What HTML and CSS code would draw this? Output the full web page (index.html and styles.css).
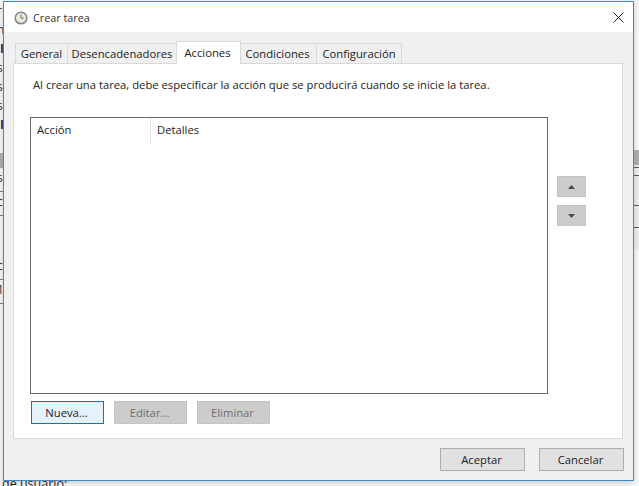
FILE: index.html
```html
<!DOCTYPE html>
<html lang="es">
<head>
<meta charset="utf-8">
<title>Crear tarea</title>
<link rel="stylesheet" href="styles.css">
</head>
<body>
<div class="desktop">
  <div class="behind-left">
    <div class="bg-row">r</div>
    <div class="bg-row">n</div>
    <div class="bg-row strong">I</div>
    <div class="bg-row">s</div>
    <div class="bg-row">s</div>
    <div class="bg-row">s</div>
    <div class="bg-row strong">I</div>
    <div class="bg-row">l</div>
    <div class="bg-band"></div>
    <div class="bg-row cell">s</div>
    <div class="bg-row cell">c</div>
    <div class="bg-gap"></div>
    <div class="bg-row cell">c</div>
    <div class="bg-row cell">1</div>
  </div>
  <div class="behind-right">
    <div class="bg-band"></div>
    <div class="r-line first"></div>
    <div class="r-line second"></div>
    <div class="r-line third"></div>
    <div class="r-line fourth"></div>
  </div>
  <div class="behind-bottom">de usuario:</div>

  <section class="dialog">
    <header class="titlebar">
      <svg class="clock" width="14" height="14" viewBox="0 0 14 14" aria-hidden="true">
        <circle cx="7" cy="7" r="5.800" fill="#ece9da" stroke="#85878b" stroke-width="1.600"/>
        <path d="M7 3.200v4h2.800" fill="none" stroke="#77776a" stroke-width="1"/>
      </svg>
      <span class="title">Crear tarea</span>
      <svg class="close" width="11" height="11" viewBox="0 0 11 11" aria-hidden="true">
        <path d="M.5.5l10 10M10.500.5l-10 10" stroke="#222" stroke-width="1" fill="none"/>
      </svg>
    </header>
    <div class="body">
      <nav class="tabs">
        <span class="tab t1">General</span>
        <span class="tab t2">Desencadenadores</span>
        <span class="tab active">Acciones</span>
        <span class="tab t4">Condiciones</span>
        <span class="tab t5">Configuración</span>
      </nav>
      <div class="panel">
        <p class="intro">Al crear una tarea, debe especificar la acción que se producirá cuando se inicie la tarea.</p>
        <div class="list-row">
          <div class="list">
            <div class="list-head">
              <span class="col col-action">Acción</span>
              <span class="col col-details">Detalles</span>
            </div>
          </div>
          <div class="arrows">
            <button class="arrow" type="button" aria-label="Subir"><svg width="7" height="4" viewBox="0 0 7 4"><path d="M3.500 0L7 4H0z" fill="#4a4a4a"/></svg></button>
            <button class="arrow" type="button" aria-label="Bajar"><svg width="7" height="4" viewBox="0 0 7 4"><path d="M0 0h7L3.500 4z" fill="#4a4a4a"/></svg></button>
          </div>
        </div>
        <div class="actions">
          <button class="btn focus" type="button">Nueva...</button>
          <button class="btn off" type="button">Editar...</button>
          <button class="btn off" type="button">Eliminar</button>
        </div>
      </div>
      <footer class="footer">
        <button class="btn main" type="button">Aceptar</button>
        <button class="btn main" type="button">Cancelar</button>
      </footer>
    </div>
  </section>
</div>
</body>
</html>
```

FILE: styles.css
```css
* { box-sizing: border-box; }
html, body { margin: 0; padding: 0; }
body {
  width: 639px;
  height: 486px;
  overflow: hidden;
  background: #fff;
  font-family: "Open Sans", "Noto Sans", sans-serif;
  font-size: 11.250px;
  color: #222;
}
.desktop { position: relative; width: 639px; height: 486px; overflow: hidden; background: #f7f8f9; }

.behind-left { position: absolute; left: 0; top: 1px; width: 3px; overflow: hidden; }
.bg-row { height: 19px; line-height: 19px; font-size: 12px; text-indent: -3px; color: #333; }
.bg-row.strong { font-weight: 700; text-indent: 0; color: #223; }
.bg-row.cell { height: 24px; border-bottom: 1px solid #777; }
.bg-band { height: 15px; background: #acacac; }
.bg-gap { height: 40px; }

.behind-right { position: absolute; left: 634px; top: 150px; width: 5px; height: 100px; background: #e9eef3; }
.behind-right .bg-band { height: 15px; }
.r-line { height: 1px; background: #555; }
.r-line.first { margin-top: 2px; }
.r-line.second { margin-top: 7px; }
.r-line.third { margin-top: 29px; }
.r-line.fourth { margin-top: 21px; }

.behind-bottom { position: absolute; left: 2px; top: 476px; font-size: 12.500px; line-height: 16px; color: #111; }

.dialog {
  position: absolute;
  left: 3px;
  top: 1px;
  width: 631px;
  height: 480px;
  display: flex;
  flex-direction: column;
  border: 1px solid #3f8ac6;
  background: #f0f0f0;
  box-shadow: 0 2px 6px rgba(120, 120, 120, .35);
}
.titlebar {
  display: flex;
  align-items: center;
  height: 30px;
  padding: 0 9px 0 10px;
  background: #fff;
}
.clock { flex: none; margin-top: 1px; }
.title { margin-left: 5px; flex: 1; font-size: 10.800px; color: #333; }
.close { flex: none; margin-right: 0; }

.body { flex: 1; display: flex; flex-direction: column; padding: 9px 9px 0 9px; }
.tabs { display: flex; align-items: flex-end; height: 22px; padding-left: 2px; position: relative; z-index: 1; }
.tab {
  display: block;
  height: 20px;
  padding-right: 2px;
  line-height: 19px;
  text-align: center;
  background: #f0f0f0;
  border: 1px solid #d9d9d9;
  border-bottom: 0;
  margin-right: -1px;
  color: #222;
}
.t1 { width: 53px; padding-right: 0; }
.t2 { width: 110px; padding-right: 0; }
.active { width: 65px; height: 23px; margin-bottom: -1px; background: #fff; line-height: 22px; position: relative; z-index: 1; }
.t4 { width: 77px; }
.t5 { width: 86px; padding-right: 0; }

.panel {
  width: 610px;
  height: 376px;
  padding: 13px 0 0 16px;
  background: #fff;
  border: 1px solid #d9d9d9;
}
.intro { margin: 0 0 0 3px; height: 16px; line-height: 16px; }
.list-row { display: flex; margin-top: 24px; }
.list { width: 518px; height: 277px; border: 1px solid #666; background: #fff; }
.list-head { display: flex; height: 25px; }
.col { line-height: 23px; padding-left: 6px; }
.col-action { width: 120px; border-right: 1px solid #e5e5e5; }
.arrows { display: flex; flex-direction: column; gap: 8px; margin: 59px 0 0 9px; }
.arrow {
  display: flex;
  align-items: center;
  justify-content: center;
  width: 29px;
  height: 21px;
  padding: 0;
  background: #ccc;
  border: 1px solid #c4c4c4;
}
.actions { display: flex; gap: 10px; margin: 7px 0 0 1px; }
.btn {
  width: 73px;
  height: 23px;
  padding: 0 2px 0 0;
  font: inherit;
  line-height: 20px;
  color: #222;
  background: #e1e1e1;
  border: 1px solid #adadad;
}
.btn.focus { background: #e5f1fb; border-color: #1873b4; }
.btn.off { background: #ccc; border-color: #c4c4c4; color: #6e6e6e; }
.footer { display: flex; justify-content: flex-end; gap: 14px; margin-top: 9px; }
.btn.main { width: 85px; }
```
